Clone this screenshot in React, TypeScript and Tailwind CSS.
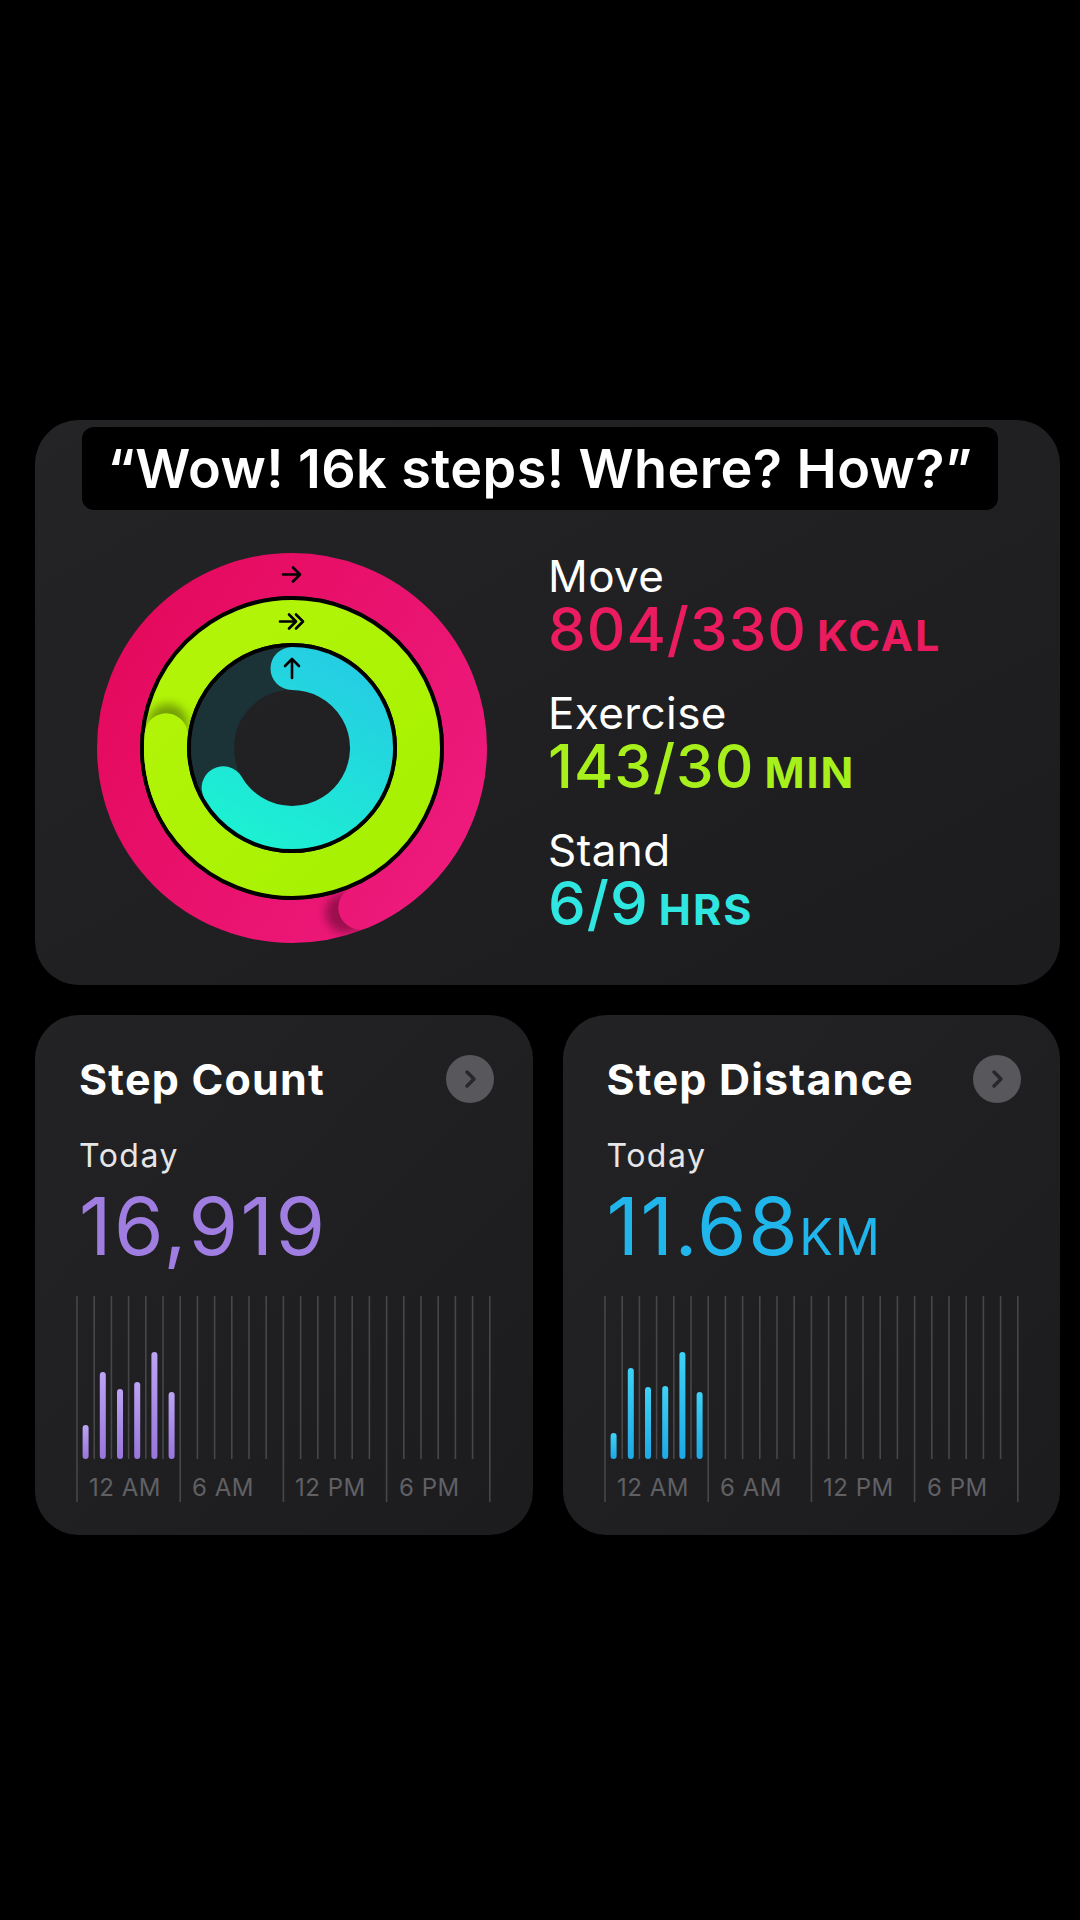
import React from "react";

const C = 195;

function pt(r: number, deg: number) {
  const a = ((deg - 90) * Math.PI) / 180;
  return [C + r * Math.cos(a), C + r * Math.sin(a)];
}

function arc(r: number, a0: number, a1: number) {
  const [x0, y0] = pt(r, a0);
  const [x1, y1] = pt(r, a1);
  const large = a1 - a0 > 180 ? 1 : 0;
  return `M ${x0} ${y0} A ${r} ${r} 0 ${large} 1 ${x1} ${y1}`;
}

function annulus(r0: number, r1: number) {
  return `M ${C - r1} ${C} a ${r1} ${r1} 0 1 0 ${r1 * 2} 0 a ${r1} ${r1} 0 1 0 ${-r1 * 2} 0 Z M ${C - r0} ${C} a ${r0} ${r0} 0 1 0 ${r0 * 2} 0 a ${r0} ${r0} 0 1 0 ${-r0 * 2} 0 Z`;
}

// ring overflow end: shadow blob in front of the round cap
function OverCap({ r, end, stroke, clip }: { r: number; end: number; stroke: string; clip: string }) {
  const [sx, sy] = pt(r, end + 5);
  return (
    <g>
      <g clipPath={`url(#${clip})`}>
        <circle cx={sx} cy={sy} r={20} fill="#000" opacity={0.35} filter="url(#blur)" />
      </g>
      <path d={arc(r, end - 40, end)} stroke={stroke} strokeWidth={43} strokeLinecap="round" fill="none" />
    </g>
  );
}

function Rings() {
  return (
    <svg width={390} height={390} viewBox="0 0 390 390">
      <defs>
        <linearGradient id="pink" gradientUnits="userSpaceOnUse" x1="0" y1="100" x2="390" y2="330">
          <stop offset="0" stopColor="#e4095c" />
          <stop offset="1" stopColor="#ee1c80" />
        </linearGradient>
        <linearGradient id="green" gradientUnits="userSpaceOnUse" x1="60" y1="60" x2="330" y2="330">
          <stop offset="0" stopColor="#b4f50a" />
          <stop offset="1" stopColor="#a6f000" />
        </linearGradient>
        <linearGradient id="cyan" gradientUnits="userSpaceOnUse" x1="250" y1="110" x2="150" y2="280">
          <stop offset="0" stopColor="#25cde3" />
          <stop offset="1" stopColor="#1cf0d2" />
        </linearGradient>
        <filter id="blur" x="-50%" y="-50%" width="200%" height="200%">
          <feGaussianBlur stdDeviation="5" />
        </filter>
        <clipPath id="pinkClip">
          <path d={annulus(152, 195)} clipRule="evenodd" />
        </clipPath>
        <clipPath id="greenClip">
          <path d={annulus(105, 148)} clipRule="evenodd" />
        </clipPath>
      </defs>

      {/* move */}
      <circle cx={C} cy={C} r={173.5} stroke="url(#pink)" strokeWidth={43} fill="none" />
      <OverCap r={173.5} end={157} stroke="url(#pink)" clip="pinkClip" />
      <circle cx={C} cy={C} r={150} stroke="#000" strokeWidth={4} fill="none" />

      {/* exercise */}
      <circle cx={C} cy={C} r={126.5} stroke="url(#green)" strokeWidth={43} fill="none" />
      <OverCap r={126.5} end={276} stroke="url(#green)" clip="greenClip" />
      <circle cx={C} cy={C} r={103} stroke="#000" strokeWidth={4} fill="none" />

      {/* stand */}
      <circle cx={C} cy={C} r={79.5} stroke="#1b3337" strokeWidth={43} fill="none" />
      <path d={arc(79.5, 0, 240)} stroke="url(#cyan)" strokeWidth={43} strokeLinecap="round" fill="none" />

      <g stroke="#000" strokeWidth={2.6} strokeLinecap="round" strokeLinejoin="round" fill="none">
        <path d="M186 21.5 H203 M196 14.5 L203 21.5 L196 28.5" />
        <path d="M183 68.5 H199 M192 61.5 L199 68.5 L192 75.5 M199 61.5 L206 68.5 L199 75.5" />
        <path d="M195 125 V106 M188 113 L195 106 L202 113" />
      </g>
    </svg>
  );
}

const metrics = [
  { label: "Move", value: "804/330", unit: "KCAL", color: "text-[#ea1b5f]" },
  { label: "Exercise", value: "143/30", unit: "MIN", color: "text-[#a7f01c]" },
  { label: "Stand", value: "6/9", unit: "HRS", color: "text-[#2fe7e0]" },
];

const STEP = 17.2;
const labels = [
  { x: 13, t: "12 AM" },
  { x: 116, t: "6 AM" },
  { x: 219, t: "12 PM" },
  { x: 323, t: "6 PM" },
];

function Chart({ id, bars, from, to }: { id: string; bars: number[]; from: string; to: string }) {
  return (
    <svg width={418} height={210} viewBox="0 0 418 210">
      <defs>
        <linearGradient id={id} x1="0" y1="0" x2="0" y2="1">
          <stop offset="0" stopColor={from} />
          <stop offset="1" stopColor={to} />
        </linearGradient>
      </defs>
      {Array.from({ length: 25 }).map((_, i) => {
        const x = 1 + i * STEP;
        return <line key={i} x1={x} x2={x} y1={0} y2={i % 6 === 0 ? 206 : 163} stroke="#47474a" strokeWidth={1.6} />;
      })}
      {bars.map((h, i) => (
        <rect key={i} x={1 + (i + 0.5) * STEP - 3} y={163 - h} width={6} height={h} rx={3} fill={`url(#${id})`} />
      ))}
      {labels.map((l) => (
        <text key={l.t} x={l.x} y={200} fill="#606064" fontSize={24} letterSpacing={0.5} fontFamily="Inter, sans-serif">
          {l.t}
        </text>
      ))}
    </svg>
  );
}

function StatCard({ title, children, chart }: { title: string; children: React.ReactNode; chart: React.ReactNode }) {
  return (
    <div className="h-[520px] rounded-[44px] bg-gradient-to-br from-[#232325] to-[#1c1c1e] pl-[44px] pt-[40px]">
      <div className="flex items-center justify-between pr-[39px]">
        <div className="text-[43px] font-bold leading-[48px] tracking-[1.2px] text-white">{title}</div>
        <div className="flex h-[48px] w-[48px] items-center justify-center rounded-full bg-[#58585c]">
          <svg width="14" height="20" viewBox="0 0 14 20">
            <path d="M4 3 L11 10 L4 17" stroke="#28282a" strokeWidth={3.5} strokeLinecap="round" strokeLinejoin="round" fill="none" />
          </svg>
        </div>
      </div>
      <div className="mt-[35px] text-[32px] leading-[36px] tracking-[1.5px] text-[#e6e6e8]">Today</div>
      {children}
      <div className="-ml-[3px] mt-[30px]">{chart}</div>
    </div>
  );
}

export default function App() {
  return (
    <div className="min-h-[1920px] w-[1080px] bg-black pl-[35px] pr-[20px] pt-[420px] font-['Inter',sans-serif]">
      {/* Activity card; its title sits under the caption */}
      <div className="relative h-[565px] rounded-[44px] bg-gradient-to-br from-[#242426] to-[#1c1c1e] pl-[45px] pt-[40px]">
        <div className="h-[48px]" />
        <div className="mt-[45px] flex items-start">
          <div className="ml-[17px]">
            <Rings />
          </div>
          <div className="ml-[61px] flex flex-col gap-[31px]">
            {metrics.map((m) => (
              <div key={m.label}>
                <div className="text-[44px] leading-[46px] tracking-[0.4px] text-white">{m.label}</div>
                <div className={`flex h-[60px] items-baseline ${m.color}`}>
                  <span className="text-[60px] font-medium leading-none tracking-[1px]">{m.value}</span>
                  <span className="ml-[10px] text-[43px] font-bold leading-none tracking-[2px]">{m.unit}</span>
                </div>
              </div>
            ))}
          </div>
        </div>

        {/* caption overlay */}
        <div className="absolute left-[47px] top-[7px] flex h-[83px] w-[916px] items-center justify-center rounded-[12px] bg-black">
          <span className="text-[54px] font-semibold leading-none tracking-[0.4px] text-white">“Wow! 16k steps! Where? How?”</span>
        </div>
      </div>

      <div className="mt-[30px] grid grid-cols-2 gap-[30px]">
        <StatCard
          title="Step Count"
          chart={<Chart id="purple" bars={[34, 87, 70, 77, 107, 67]} from="#bca4f4" to="#9875dc" />}
        >
          <div className="mt-[12px] h-[80px] text-[80px] leading-[80px] tracking-[2.5px] text-[#a07de0]">16,919</div>
        </StatCard>
        <StatCard
          title="Step Distance"
          chart={<Chart id="blue" bars={[26, 91, 72, 73, 107, 67]} from="#3fd2f6" to="#1ea8e6" />}
        >
          <div className="mt-[12px] flex h-[80px] items-baseline text-[#20b6ec]">
            <span className="text-[80px] leading-none tracking-[1.5px]">11.68</span>
            <span className="text-[50px] leading-none tracking-[2px]">KM</span>
          </div>
        </StatCard>
      </div>
    </div>
  );
}
